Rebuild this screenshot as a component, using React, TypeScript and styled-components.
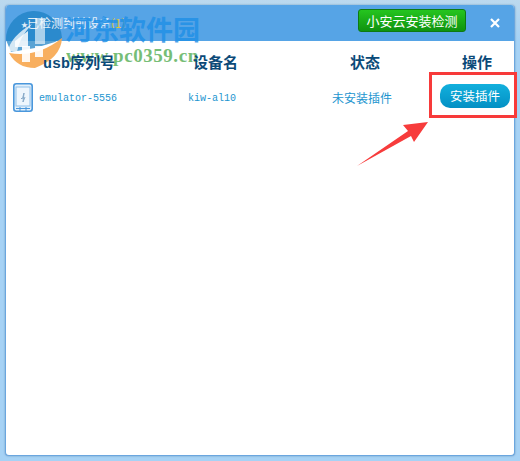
import React from "react";
import styled, { createGlobalStyle } from "styled-components";

const Global = createGlobalStyle`
  html, body { margin: 0; padding: 0; }
  body { width: 520px; height: 461px; overflow: hidden; background: #a9d3f4; font-family: "Noto Sans CJK SC", "Liberation Sans", sans-serif; }
`;

const Stage = styled.div`
  position: relative;
  width: 520px;
  height: 461px;
  padding: 5px;
  box-sizing: border-box;
  background: linear-gradient(#bcd9ee, #a6d2f5 40px);
`;

const Win = styled.div`
  width: 510px;
  height: 451px;
  box-sizing: border-box;
  border-radius: 4px;
  overflow: hidden;
  background: #fff;
  border: 1px solid #6aa6df;
  border-top: 0;
  box-shadow: 0 0 2px #6d93b8;
  display: flex;
  flex-direction: column;
`;

const Header = styled.header`
  height: 36px;
  flex: none;
  background: #56a4e6;
  display: flex;
  align-items: center;
  padding: 0 14px 0 15px;
`;

const Title = styled.div`
  position: relative;
  z-index: 2;
  flex: 1;
  color: #fff;
  font-size: 12px;
  white-space: nowrap;
  opacity: 0.85;
  padding-bottom: 2px;
`;

const Star = styled.span`
  display: inline-block;
  width: 6px;
  font-size: 7px;
  vertical-align: 1px;
`;

const Count = styled.span`
  color: #f4cc1c;
`;

const CheckButton = styled.button`
  width: 108px;
  height: 23px;
  box-sizing: border-box;
  margin: 0 24px 5px 0;
  padding: 0;
  border: 1px solid #0e7a12;
  border-radius: 3px;
  background: linear-gradient(#25c51f, #0f9310);
  color: #fff;
  font: 13px "Noto Sans CJK SC", sans-serif;
`;

const Close = styled.svg`
  width: 10px;
  height: 10px;
  margin-bottom: 1px;
`;

const Table = styled.div`
  position: relative;
  z-index: 4;
  display: grid;
  grid-template-columns: 140px 135px 132px 1fr;
  padding-left: 7px;
`;

const HeadCell = styled.div<{ $indent: number }>`
  height: 42px;
  line-height: 48px;
  padding-left: ${(p) => p.$indent}px;
  color: #0b4a78;
  font-size: 15px;
  font-weight: 700;
  font-family: "Liberation Mono", "Noto Sans CJK SC", monospace;
  white-space: nowrap;
`;

const Cell = styled.div<{ $indent: number; $size: number }>`
  height: 30px;
  display: flex;
  align-items: center;
  gap: 6px;
  padding-left: ${(p) => p.$indent}px;
  color: #1d95cf;
  font-size: ${(p) => p.$size}px;
  font-family: "Liberation Mono", "Noto Sans CJK SC", monospace;
  white-space: nowrap;
`;

const InstallButton = styled.button`
  width: 70px;
  height: 24px;
  padding: 0;
  border: 0;
  border-radius: 10px;
  margin-top: -5px;
  background: linear-gradient(#12b0dd, #0390c4);
  color: #fff;
  font: 12.5px "Noto Sans CJK SC", sans-serif;
`;

const Overlay = styled.svg`
  position: absolute;
  z-index: 5;
  left: 0;
  top: 0;
  pointer-events: none;
`;

const Highlight = styled.div`
  position: absolute;
  z-index: 5;
  left: 429px;
  top: 72px;
  width: 88px;
  height: 46px;
  box-sizing: border-box;
  border: 3px solid #f73a3a;
`;

const MarkName = styled.div`
  position: absolute;
  z-index: 3;
  left: 65px;
  top: 9px;
  color: #1e8fe6;
  opacity: 0.8;
  font: 700 27px "Noto Sans CJK SC", sans-serif;
  white-space: nowrap;
`;

const MarkUrl = styled.div`
  position: absolute;
  z-index: 3;
  left: 66px;
  top: 45px;
  color: #5fb35f;
  opacity: 0.85;
  font: 700 19px "Liberation Serif", serif;
  letter-spacing: 0.55px;
  white-space: nowrap;
`;

const Logo = styled.svg`
  position: absolute;
  z-index: 1;
  left: 5px;
  top: 10px;
`;

export default function App() {
  return (
    <Stage>
      <Global />
      <Win>
        <Header>
          <Title>
            <Star>★</Star>已检测到前设备<Count>(1)</Count>
          </Title>
          <CheckButton>小安云安装检测</CheckButton>
          <Close viewBox="0 0 10 10">
            <path d="M1 1 L9 9 M9 1 L1 9" stroke="#fff" strokeWidth="2.2" />
          </Close>
        </Header>
        <Table>
          <HeadCell $indent={30}>usb序列号</HeadCell>
          <HeadCell $indent={40}>设备名</HeadCell>
          <HeadCell $indent={62}>状态</HeadCell>
          <HeadCell $indent={42}>操作</HeadCell>
          <Cell $indent={0} $size={10}>
            <svg width="20" height="30" viewBox="0 0 20 30">
              <rect x="0.8" y="0.8" width="18.4" height="27.4" rx="2.5" fill="#e3f0fb" stroke="#4a97dc" strokeWidth="1.6" />
              <rect x="3" y="4" width="14" height="19" fill="#eef6fd" stroke="#8fc0ea" />
              <path d="M3 25.5 H17 M7 24 V28 M13 24 V28" stroke="#4a97dc" />
              <path d="M8 15.5 H9.5 L11 10 L10 19 L12 14" stroke="#86a9c8" fill="none" />
            </svg>
            emulator-5556
          </Cell>
          <Cell $indent={35} $size={10}>kiw-al10</Cell>
          <Cell $indent={44} $size={12}>未安装插件</Cell>
          <Cell $indent={20} $size={12}>
            <InstallButton>安装插件</InstallButton>
          </Cell>
        </Table>
      </Win>
      <Logo width="60" height="60" viewBox="0 0 60 60">
        <path d="M1 30 A28 28 0 0 1 57 28 L50 32 L30 38 L6 42 Z" fill="#1a7fc4" opacity="0.72" />
        <path d="M10 31 L23 21 V37 H10 Z" fill="#fff" opacity="0.85" />
        <path d="M30 8 H40 V34 H30 Z" fill="#fff" opacity="0.6" />
        <path d="M4 43 Q32 48 57 28 Q56 48 30 58 Q12 58 4 43 Z" fill="#f7a64e" opacity="0.9" />
        <path d="M17 36 H25 V52 H17 Z M30 36 H38 V47 H30 Z" fill="#fff" opacity="0.9" />
        <path d="M3 41 Q6 26 27 14 Q14 28 12 42 Z" fill="#fff" opacity="0.75" />
      </Logo>
      <MarkName>河东软件园</MarkName>
      <MarkUrl>www.pc0359.cn</MarkUrl>
      <Highlight />
      <Overlay width="520" height="461" viewBox="0 0 520 461">
        <path d="M357 166 L408 131 L403 125 L428 122 L414 142 L411 136 Z" fill="#f73c3c" />
      </Overlay>
    </Stage>
  );
}
